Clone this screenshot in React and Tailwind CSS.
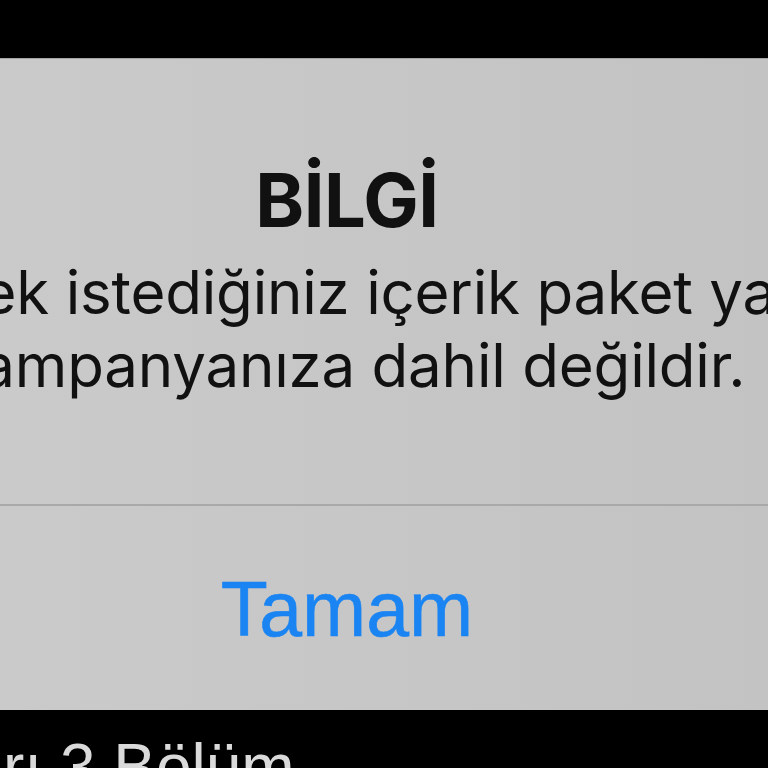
export default function App() {
  return (
    <div className="w-[768px] h-[768px] overflow-hidden bg-black flex flex-col">
      <div className="h-[58px] shrink-0 bg-black" />
      <div className="h-[652px] shrink-0 bg-linear-to-r from-[#cbcaca] to-[#c3c3c3] border-t border-[#a4a4a4] overflow-hidden flex flex-col">
        <div className="w-[1000px] ml-[-153px] shrink-0 flex flex-col items-center">
          <div className="pt-[101px] h-[80px] box-content text-[74px] leading-[80px] font-bold text-[#111] font-['Inter',sans-serif] tracking-[-0.5px]">
            BİLGİ
          </div>
          <div className="mt-[16px] text-[60px] leading-[73px] text-[#111] font-['Inter',sans-serif] text-center whitespace-nowrap tracking-[-0.2px]">
            <div>İzlemek istediğiniz içerik paket ya da</div>
            <div>kampanyanıza dahil değildir.</div>
          </div>
        </div>
        <div className="mt-[102px] h-[2px] shrink-0 bg-[#a9a9a9]" />
        <div className="flex-1 w-[1000px] ml-[-153px] flex items-center justify-center pt-[4px]">
          <span className="text-[77px] text-[#1a84f2] font-['Liberation_Sans',sans-serif] [-webkit-text-stroke:0.6px_#1a84f2]">Tamam</span>
        </div>
      </div>
      <div className="flex-1 bg-black pt-[21px] overflow-hidden">
        <div className="ml-[3px] text-[64px] leading-[72px] text-[#dadada] font-['Liberation_Sans',sans-serif] whitespace-nowrap">
          rı 3 Bölüm
        </div>
      </div>
    </div>
  );
}
